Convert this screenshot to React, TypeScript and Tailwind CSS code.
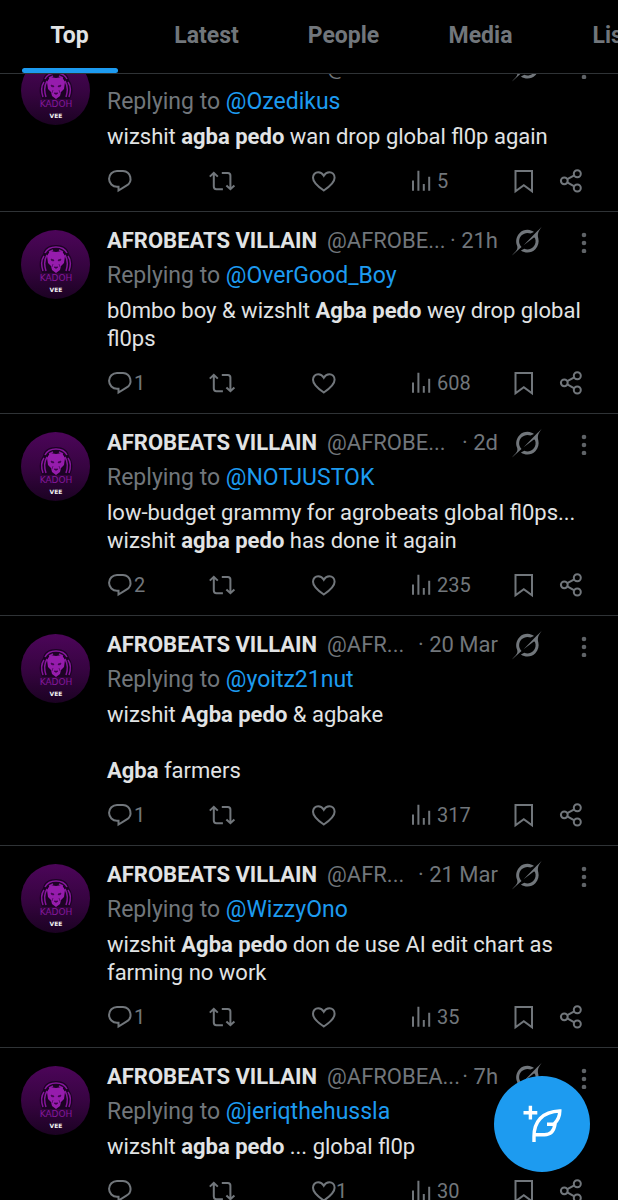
import React, { useState } from "react";

interface Post {
  handle: string;
  time: string;
  replyTo: string;
  lines: React.ReactNode;
  replies?: string;
  likes?: string;
  views: string;
}

const tabs = ["Top", "Latest", "People", "Media", "Lists"];

const posts: Post[] = [
  {
    handle: "@AFROBE...",
    time: "8d",
    replyTo: "@Ozedikus",
    lines: (
      <>
        wizshit <b>agba pedo</b> wan drop global fl0p again
      </>
    ),
    views: "5",
  },
  {
    handle: "@AFROBE...",
    time: "21h",
    replyTo: "@OverGood_Boy",
    lines: (
      <>
        b0mbo boy & wizshlt <b>Agba pedo</b> wey drop global
        <br />
        fl0ps
      </>
    ),
    replies: "1",
    views: "608",
  },
  {
    handle: "@AFROBE...",
    time: "2d",
    replyTo: "@NOTJUSTOK",
    lines: (
      <>
        low-budget grammy for agrobeats global fl0ps...
        <br />
        wizshit <b>agba pedo</b> has done it again
      </>
    ),
    replies: "2",
    views: "235",
  },
  {
    handle: "@AFR...",
    time: "20 Mar",
    replyTo: "@yoitz21nut",
    lines: (
      <>
        wizshit <b>Agba pedo</b> & agbake
        <br />
        <br />
        <b>Agba</b> farmers
      </>
    ),
    replies: "1",
    views: "317",
  },
  {
    handle: "@AFR...",
    time: "21 Mar",
    replyTo: "@WizzyOno",
    lines: (
      <>
        wizshit <b>Agba pedo</b> don de use AI edit chart as
        <br />
        farming no work
      </>
    ),
    replies: "1",
    views: "35",
  },
  {
    handle: "@AFROBEA...",
    time: "7h",
    replyTo: "@jeriqthehussla",
    lines: (
      <>
        wizshlt <b>agba pedo</b> ... global fl0p
      </>
    ),
    likes: "1",
    views: "30",
  },
];

const Avatar = () => (
  <svg viewBox="0 0 69 69" className="size-[69px] shrink-0 rounded-full">
    <defs>
      <linearGradient id="avatarBg" x1="0" y1="0" x2="0" y2="1">
        <stop offset="0" stopColor="#4c0559" />
        <stop offset="0.55" stopColor="#35043f" />
        <stop offset="1" stopColor="#1b0222" />
      </linearGradient>
    </defs>
    <rect width="69" height="69" fill="url(#avatarBg)" />
    {/* mane */}
    <path
      d="M22 24c1-6 6-9 13-9s12 3 13 9c3 4 4 9 3 14l-2 5H21l-2-5c-1-5 0-10 3-14z"
      fill="#1c0324"
    />
    <path
      d="M24 23c2-4 6-6 11-6s9 2 11 6M23 26c-3 4-3 9-1 15M26 25c-3 5-3 10-1 16M47 26c3 4 3 9 1 15M44 25c3 5 3 10 1 16M28 22l4-2M42 22l-4-2"
      fill="none"
      stroke="#84169a"
      strokeWidth="1.5"
    />
    {/* face */}
    <path
      d="M29 21l6 1 6-1 3 5-1 7-3 3-1 4-4 3-4-3-1-4-3-3-1-7z"
      fill="#961cad"
    />
    <path
      d="M30 29l3 1-.5 1-2-.5zM40 29l-3 1 .5 1 2-.5zM33 37h4l-2 1.500zM32 34l-1 3M38 34l1 3"
      fill="#3a0547"
      stroke="#3a0547"
      strokeWidth="0.6"
    />
    <text
      x="35"
      y="51"
      textAnchor="middle"
      fontSize="9"
      fontFamily="DejaVu Sans, sans-serif"
      fill="#83189a"
    >
      KADOH
    </text>
    <text
      x="35"
      y="62"
      textAnchor="middle"
      fontSize="6"
      fontWeight="bold"
      fontFamily="DejaVu Sans, sans-serif"
      fill="#f0f0f0"
    >
      VEE
    </text>
  </svg>
);

const GrokIcon = () => (
  <svg viewBox="0 0 33 32" className="size-[30px]" fill="currentColor">
    <path d="M12.745 20.54l10.97-8.19c.539-.4 1.307-.244 1.564.38 1.349 3.288.746 7.241-1.938 9.955-2.683 2.714-6.417 3.31-9.83 1.954l-3.728 1.745c5.347 3.697 11.84 2.782 15.898-1.324 3.219-3.255 4.216-7.692 3.284-11.693l.008.009c-1.351-5.878.332-8.227 3.782-13.031L33 0l-4.54 4.59v-.014L12.743 20.544m-2.263 1.987c-3.837-3.707-3.175-9.446.1-12.755 2.42-2.449 6.388-3.448 9.852-1.979l3.72-1.737c-.67-.49-1.53-1.017-2.515-1.387-4.455-1.854-9.789-.931-13.41 2.728-3.483 3.523-4.579 8.94-2.697 13.561 1.405 3.454-.899 5.898-3.22 8.364C1.49 30.2.666 31.074 0 32l10.478-9.466" />
  </svg>
);

interface IconProps {
  children: React.ReactNode;
}

const Icon: React.FC<IconProps> = ({ children }) => (
  <svg
    viewBox="0 0 26 26"
    className="size-[26px] shrink-0 overflow-visible"
    fill="none"
    stroke="currentColor"
    strokeWidth="2"
  >
    {children}
  </svg>
);

const ReplyIcon = () => (
  <Icon>
    <path d="M10 2.900h6a7.900 7.900 0 0 1 3.400 14.800L11.500 22.500v-3.700H10a7.900 7.900 0 0 1 0-15.900z" />
  </Icon>
);

const RepostIcon = () => (
  <Icon>
    <path d="M1.800 8.600l4-3.800 4 3.800M5.800 5v13.600c0 1.700.9 2.600 2.600 2.600h6.500M13.800 4.900h6c1.700 0 2.600.9 2.600 2.600V21M18.400 17.400l4 3.800 4-3.800" />
  </Icon>
);

const LikeIcon = () => (
  <Icon>
    <path d="M14.800 22.500C8 18 4 14.300 4 9.800c0-3.200 2.300-5.600 5.200-5.600 2.500 0 4.300 1.300 5.600 3.600 1.300-2.300 3.100-3.600 5.600-3.600 2.900 0 5.200 2.400 5.200 5.600 0 4.500-4 8.200-10.800 12.700z" />
  </Icon>
);

const ViewsIcon = () => (
  <Icon>
    <path d="M3 12.500v10.300M8.400 2.800v20M13.800 16v6.800M19.200 8.800v14" />
  </Icon>
);

const BookmarkIcon = () => (
  <Icon>
    <path d="M4.500 2.900h16.500v20.400l-8.200-6-8.300 6z" />
  </Icon>
);

const ShareIcon = () => (
  <Icon>
    <circle cx="5.300" cy="12.800" r="3.400" />
    <circle cx="18.300" cy="5.700" r="3.500" />
    <circle cx="18.300" cy="20" r="3.500" />
    <path d="M8.300 11.200l7-3.800M8.300 14.400l7 4" />
  </Icon>
);

interface ActionProps {
  label: string;
  count?: string;
  children: React.ReactNode;
}

const Action: React.FC<ActionProps> = ({ label, count, children }) => (
  <button
    aria-label={label}
    className="flex flex-1 items-center gap-px cursor-pointer"
  >
    {children}
    {count && <span>{count}</span>}
  </button>
);

interface PostItemProps {
  post: Post;
}

const PostItem: React.FC<PostItemProps> = ({ post }) => (
  <article className="flex gap-[17px] border-b border-[#2f3336] pl-[21px] pr-5 pt-[15px] pb-4">
    <div className="pt-[3px]">
      <Avatar />
    </div>
    <div className="flex flex-1 min-w-0 flex-col gap-[7px] text-[22px] leading-7">
      <div className="flex h-7 items-center whitespace-nowrap text-[#71767b]">
        <span className="font-bold text-[#e1e3e4]">AFROBEATS VILLAIN</span>
        <span className="ml-2.5">{post.handle}</span>
        <span className="ml-auto">· {post.time}</span>
        <button aria-label="Grok" className="ml-3.5 cursor-pointer">
          <GrokIcon />
        </button>
        <button
          aria-label="More"
          className="ml-9 mr-2 cursor-pointer text-[#5f6367]"
        >
          <svg viewBox="0 0 12 24" className="h-6 w-3" fill="currentColor">
            <circle cx="6" cy="6" r="2.300" />
            <circle cx="6" cy="14" r="2.300" />
            <circle cx="6" cy="22" r="2.300" />
          </svg>
        </button>
      </div>
      <div className="text-[23px] text-[#71767b]">
        Replying to{" "}
        <a href="#" className="text-[#1d9bf0]">
          {post.replyTo}
        </a>
      </div>
      <p className="text-[#e1e3e4]">{post.lines}</p>
      <div className="mt-[9px] flex h-7 items-center pr-[13px] text-xl text-[#71767b]">
        <Action label="Reply" count={post.replies}>
          <ReplyIcon />
        </Action>
        <Action label="Repost">
          <RepostIcon />
        </Action>
        <Action label="Like" count={post.likes}>
          <LikeIcon />
        </Action>
        <Action label="Views" count={post.views}>
          <ViewsIcon />
        </Action>
        <button aria-label="Bookmark" className="cursor-pointer">
          <BookmarkIcon />
        </button>
        <button aria-label="Share" className="ml-[22px] cursor-pointer">
          <ShareIcon />
        </button>
      </div>
    </div>
  </article>
);

const App = () => {
  const [active, setActive] = useState<string>("Top");
  return (
    <div className="flex h-screen flex-col overflow-hidden bg-black font-['Roboto',sans-serif]">
      <nav className="flex h-[74px] shrink-0 overflow-hidden border-b border-[#2f3336] pl-px">
        {tabs.map((tab) => (
          <button
            key={tab}
            onClick={() => setActive(tab)}
            className={`flex w-[137px] shrink-0 cursor-pointer flex-col items-center justify-between pt-[21px] text-[23px] leading-[30px] font-bold ${
              active === tab ? "text-[#e1e3e4]" : "text-[#71767b]"
            }`}
          >
            {tab}
            {active === tab && (
              <span className="h-[5px] w-24 rounded-full bg-[#1d9bf0]" />
            )}
          </button>
        ))}
      </nav>
      <main className="min-h-0 flex-1 overflow-hidden">
        <div className="-mt-9">
          {posts.map((post) => (
            <PostItem key={post.replyTo} post={post} />
          ))}
        </div>
      </main>
      <button
        aria-label="New post"
        className="fixed right-7 bottom-7 size-24 cursor-pointer rounded-full bg-[#1d9bf0] text-white"
      >
        <svg
          viewBox="0 0 96 96"
          className="size-24"
          fill="none"
          stroke="currentColor"
          strokeWidth="3.4"
        >
          <path d="M29.500 36.700h13.800M36.400 29.800v13.800" />
          <path d="M40 66v-5.500C40 46 48 35.500 65.800 35c0 5.500-2 9.500-5.800 13M53 48.300h8c-1 6.500-4.500 10.400-10.500 10.400H40" />
        </svg>
      </button>
    </div>
  );
};

export default App;
